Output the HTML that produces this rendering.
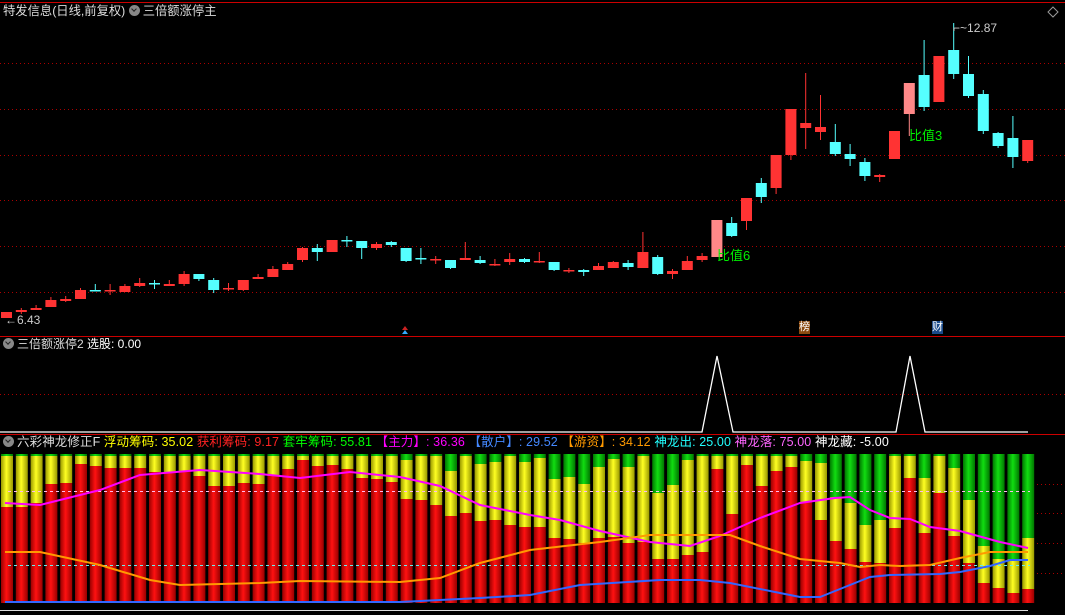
<!DOCTYPE html>
<html><head><meta charset="utf-8">
<style>
body{margin:0;background:#000;width:1065px;height:615px;overflow:hidden;position:relative;font-family:"Liberation Sans","Noto Sans CJK SC",sans-serif;}
svg{position:absolute;left:0;top:0}
.t{position:absolute;font-size:12px;white-space:nowrap;line-height:15px;color:#ddd}
.ic{display:inline-block;width:11px;height:11px;border-radius:50%;background:#888;vertical-align:-1px;margin-right:3px;position:relative}
.ic:after{content:"";position:absolute;left:3px;top:2px;width:3px;height:3px;border-right:1.5px solid #222;border-bottom:1.5px solid #222;transform:rotate(45deg)}
</style></head><body>
<svg id="s" width="1065" height="615" xmlns="http://www.w3.org/2000/svg"></svg>
<div class="t" style="left:3px;top:4px;font-size:12.3px">特发信息(日线,前复权) <span class="ic"></span>三倍额涨停主</div>
<div class="t" style="left:3px;top:337px"><span class="ic"></span>三倍额涨停2 <span style="color:#fff">选股: 0.00</span></div>
<div class="t" style="left:3px;top:435px;font-size:12.5px;letter-spacing:0.1px"><span class="ic"></span>六彩神龙修正F <span style="color:#ff0">浮动筹码: 35.02</span> <span style="color:#f22">获利筹码: 9.17</span> <span style="color:#0f0">套牢筹码: 55.81</span> <span style="color:#f0f">【主力】: 36.36</span> <span style="color:#48f">【散户】: 29.52</span> <span style="color:#f90">【游资】: 34.12</span> <span style="color:#2ff">神龙出: 25.00</span> <span style="color:#f6f">神龙落: 75.00</span> <span style="color:#fff">神龙藏: -5.00</span></div>
<div class="t" style="left:5px;top:313px;font-size:12px;color:#ccc">←6.43</div>
<div class="t" style="left:953px;top:21px;font-size:12px;color:#ccc">⌐~12.87</div>
<div class="t" style="left:717px;top:248px;font-size:13px;color:#0e0">比值6</div>
<div class="t" style="left:909px;top:128px;font-size:13px;color:#0e0">比值3</div>
<div class="t" style="left:799px;top:321px;font-size:11px;color:#fff;background:#8a4a10;line-height:13px">榜</div>
<div class="t" style="left:932px;top:321px;font-size:11px;color:#fff;background:#1a4a8a;line-height:13px">财</div>
<script>
var s=document.getElementById('s'),h='';
function L(x1,y1,x2,y2,c,w,d){h+='<line x1="'+x1+'" y1="'+y1+'" x2="'+x2+'" y2="'+y2+'" stroke="'+c+'" stroke-width="'+(w||1)+'"'+(d?' stroke-dasharray="'+d+'"':'')+'/>';}
function R(x,y,w,hh,f){h+='<rect x="'+x+'" y="'+y+'" width="'+w+'" height="'+hh+'" fill="'+f+'"/>';}
h+='<defs>';
[['r','#900','#f11'],['y','#990','#ff2'],['g','#070','#1d1']].forEach(function(a){h+='<linearGradient id="'+a[0]+'"><stop offset="0" stop-color="'+a[1]+'"/><stop offset="0.45" stop-color="'+a[2]+'"/><stop offset="1" stop-color="'+a[1]+'"/></linearGradient>';});
h+='</defs>';
L(0,2.5,1065,2.5,'#c00',1);L(0,336.5,1065,336.5,'#c00',1);L(0,434.5,1065,434.5,'#c00',1);
h+='<path d="M1053 7 L1058 12 L1053 17 L1048 12 Z" fill="none" stroke="#999"/>';
[63,109,155,200,246,292].forEach(function(y){L(0,y+.5,1065,y+.5,'#a00',1,'1 3');});
L(0,394.5,1065,394.5,'#a00',1,'1 3');
var C=[[312,318,0,0,'r'],[310,312,308,314,'r'],[308,310,305,310,'r'],[300,307,297,307,'r'],[299,301,296,302,'r'],[290,299,288,299,'r'],[290,291,284,291,'c'],[290,291,284,295,'r'],[286,292,284,292,'r'],[283,286,278,287,'r'],[283,284,280,289,'c'],[284,286,280,286,'r'],[274,284,271,286,'r'],[274,279,274,281,'c'],[280,290,278,293,'c'],[288,289,283,291,'r'],[280,290,280,291,'r'],[277,279,274,279,'r'],[269,277,266,277,'r'],[264,270,262,270,'r'],[248,260,247,262,'r'],[248,252,244,261,'c'],[240,252,240,252,'r'],[240,241,236,247,'c'],[241,248,241,259,'c'],[244,248,242,250,'r'],[242,245,241,247,'c'],[248,261,248,262,'c'],[258,259,248,264,'c'],[259,260,256,264,'r'],[260,268,260,269,'c'],[258,260,242,260,'r'],[260,263,256,264,'c'],[264,265,259,266,'r'],[259,262,253,265,'r'],[259,262,258,263,'c'],[261,262,252,263,'r'],[262,270,262,271,'c'],[270,271,268,273,'r'],[270,272,269,276,'c'],[266,270,263,270,'r'],[262,268,261,268,'r'],[263,267,260,270,'c'],[252,268,232,268,'r'],[257,274,255,275,'c'],[271,274,269,279,'r'],[261,270,256,270,'r'],[256,260,253,262,'r'],[220,257,220,257,'p'],[223,236,217,237,'c'],[198,221,198,230,'r'],[183,197,178,203,'c'],[155,188,155,194,'r'],[109,155,109,160,'r'],[123,128,73,149,'r'],[127,132,95,140,'r'],[142,154,124,156,'c'],[154,159,144,166,'c'],[162,176,158,181,'c'],[175,177,174,182,'r'],[131,159,131,159,'r'],[83,114,83,136,'p'],[75,107,40,111,'c'],[56,102,56,102,'r'],[50,74,23,79,'c'],[74,96,56,98,'c'],[94,131,90,134,'c'],[133,146,132,148,'c'],[138,157,116,168,'c'],[140,161,140,163,'r']];
var col={r:'#f33',c:'#5ff',p:'#f88'};
C.forEach(function(c,i){var x=6.5+14.8*i;var f=col[c[4]];
 if(c[2])L(x,c[2],x,c[3],f,1);
 var hh=Math.max(c[1]-c[0],1.5);R(x-5.5,c[0],11,hh,f);});
h+='<path d="M402 330 L405 326 L408 330 Z" fill="#c22"/><path d="M402 334 L405 330 L408 334 Z" fill="#3af"/>';
h+='<polyline points="0,432 702,432 717,356 733,432 896,432 910,356 925,432 1028,432" fill="none" stroke="#fff" stroke-width="1.3"/>';
var B=[[456,507],[456,507],[456,503],[456,484],[456,483],[456,464],[456,466],[456,468],[456,468],[456,468],[456,472],[456,473],[456,471],[456,476],[456,486],[456,486],[456,483],[456,484],[456,476],[456,469],[456,460],[456,466],[456,465],[456,469],[456,478],[456,479],[456,482],[460,499],[456,500],[456,505],[471,516],[456,513],[464,521],[462,520],[456,525],[462,527],[458,527],[479,538],[477,539],[484,543],[467,538],[459,537],[467,543],[456,542],[493,559],[485,559],[460,555],[456,552],[456,469],[456,514],[456,465],[456,486],[456,471],[456,467],[461,502],[463,520],[497,541],[503,549],[525,562],[520,563],[456,528],[456,478],[478,533],[456,493],[468,536],[500,563],[546,583],[559,588],[559,593],[538,589]];
B.forEach(function(b,i){var x=1+14.8*i,w=12;
 R(x,454,w,b[0]-454,'url(#g)');R(x,b[0],w,b[1]-b[0],'url(#y)');R(x,b[1],w,603-b[1],'url(#r)');});
L(8,491.5,1030,491.5,'#fbe',1,'3 3');L(8,565.5,1030,565.5,'#6ee',1,'3 3');
[484,513,543,573].forEach(function(y){L(1037,y+.5,1065,y+.5,'#a00',1,'1 3');});
function P(pts,c){h+='<polyline points="'+pts+'" fill="none" stroke="'+c+'" stroke-width="2"/>';}
P('5,503 40,505 100,490 140,475 200,470 260,474 300,478 350,472 400,477 440,486 480,505 530,515 560,520 600,531 650,542 690,546 720,536 760,518 800,503 835,498 850,497 870,510 890,518 910,519 930,527 960,531 1000,542 1028,548','#f0f');
P('5,552 40,552 100,565 150,580 180,585 260,583 300,581 400,582 440,578 480,563 530,550 600,542 650,535 700,535 730,535 760,546 800,559 840,563 860,567 880,565 900,566 930,565 960,558 990,552 1028,552','#f90');
P('5,602 400,602 480,598 530,595 580,585 660,580 700,580 730,583 780,593 800,597 820,597 850,585 870,577 890,575 940,574 960,572 990,566 1010,560 1028,560','#36f');
L(0,610.5,1028,610.5,'#ddd',1);
s.innerHTML=h;
</script>
</body></html>
